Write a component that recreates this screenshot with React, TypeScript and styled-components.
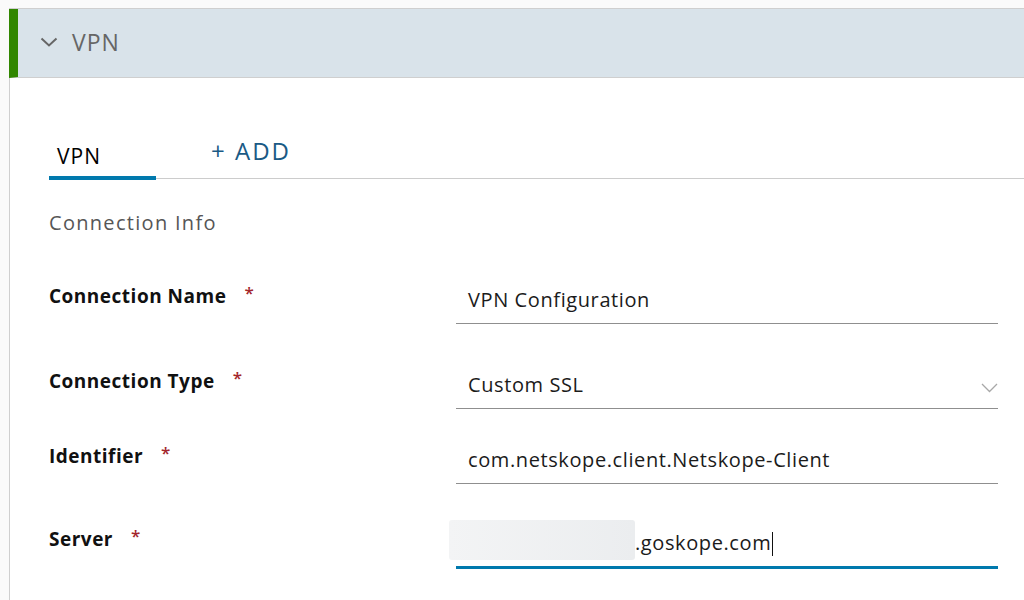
import React from "react";
import styled, { createGlobalStyle } from "styled-components";

const GlobalStyle = createGlobalStyle`
    html, body {
        margin: 0;
        padding: 0;
        background: #fafafa;
        font-family: "Open Sans", "Noto Sans", sans-serif;
    }
`;

const Page = styled.div`
    height: 600px;
    padding: 8px 0 0 9px;
    box-sizing: border-box;
    overflow: hidden;
`;

const Panel = styled.section`
    height: 100%;
    background: #fff;
    border-left: 1px solid #cfcfcf;
    border-top: 1px solid #cfcfcf;
`;

const PanelHeader = styled.div`
    height: 65px;
    display: flex;
    align-items: center;
    gap: 14px;
    padding: 0 0 3px 22px;
    background: #d9e3ea;
    border-left: 9px solid #318700;
    border-bottom: 1px solid #cfcfcf;
    margin-left: -1px;
    color: #666;
    font-size: 23px;
    letter-spacing: 1px;
`;

const PanelBody = styled.div`
    padding: 0 25px 0 39px;
`;

const TabBar = styled.div`
    display: flex;
    align-items: flex-end;
    height: 52px;
    margin-top: 48px;
    margin-right: -25px;
    border-bottom: 1px solid #cccccc;
`;

const Tab = styled.button<{ $active?: boolean }>`
    font-family: inherit;
    background: none;
    border: none;
    border-bottom: 4px solid ${(p) => (p.$active ? "#0079ad" : "transparent")};
    margin-bottom: -2px;
    padding: 0 8px 6px;
    min-width: 107px;
    text-align: left;
    font-size: 21px;
    letter-spacing: 1px;
    color: #000;
    cursor: pointer;
`;

const AddTab = styled.button`
    font-family: inherit;
    background: none;
    border: none;
    align-self: flex-start;
    margin-left: 55px;
    padding: 8px 0 0;
    font-size: 24px;
    letter-spacing: 2px;
    color: #1a5a85;
    cursor: pointer;
`;

const SectionTitle = styled.h3`
    margin: 30px 0 0;
    font-size: 20px;
    font-weight: 400;
    letter-spacing: 1.3px;
    color: #565656;
    line-height: 28px;
`;

const Row = styled.div<{ $top: number }>`
    display: grid;
    grid-template-columns: 407px 542px;
    align-items: start;
    margin-top: ${(p) => p.$top}px;
`;

const Label = styled.label`
    display: flex;
    gap: 18px;
    font-size: 19px;
    font-weight: 700;
    letter-spacing: 0.5px;
    line-height: 26px;
    color: #111;
`;

const Required = styled.span`
    color: #a3262c;
    font-size: 17px;
    font-weight: 600;
    line-height: 20px;
`;

const Field = styled.div<{ $focused?: boolean }>`
    position: relative;
    height: 36px;
    display: flex;
    align-items: flex-start;
    padding: 4px 0 0 12px;
    border-bottom: ${(p) => (p.$focused ? "3px solid #0079ad" : "1px solid #8f8f8f")};
    font-size: 20px;
    letter-spacing: 0.6px;
    line-height: 26px;
    color: #1b1b1b;
`;

const Caret = styled.svg`
    position: absolute;
    right: 0;
    top: 15px;
`;

const Masked = styled.span`
    display: inline-block;
    width: 186px;
    height: 40px;
    margin: -10px 0 0 -19px;
    border-radius: 3px;
    background: linear-gradient(90deg, #f3f4f5 0%, #ebedef 100%);
`;

const Cursor = styled.span`
    display: inline-block;
    width: 1px;
    height: 24px;
    margin: 2px 0 0 1px;
    background: #111;
`;

const Chevron = () => (
    <svg width="18" height="10" viewBox="0 0 18 10">
        <polyline points="1.5,1.5 9,8.5 16.5,1.5" fill="none" stroke="#666" strokeWidth="2" />
    </svg>
);

const fields = [
    { label: "Connection Name", value: "VPN Configuration", top: 46 },
    { label: "Connection Type", value: "Custom SSL", top: 44, select: true },
    { label: "Identifier", value: "com.netskope.client.Netskope-Client", top: 34 },
];

const App: React.FC = () => {
    return (
        <>
            <GlobalStyle />
            <Page>
                <Panel>
                    <PanelHeader>
                        <Chevron />
                        <span>VPN</span>
                    </PanelHeader>
                    <PanelBody>
                        <TabBar>
                            <Tab $active>VPN</Tab>
                            <AddTab>+ ADD</AddTab>
                        </TabBar>
                        <SectionTitle>Connection Info</SectionTitle>
                        {fields.map((f) => (
                            <Row key={f.label} $top={f.top}>
                                <Label>
                                    {f.label}
                                    <Required>*</Required>
                                </Label>
                                <Field>
                                    {f.value}
                                    {f.select && (
                                        <Caret width="17" height="10" viewBox="0 0 17 10">
                                            <polyline
                                                points="1,1 8.5,8.5 16,1"
                                                fill="none"
                                                stroke="#a8a8a8"
                                                strokeWidth="1.3"
                                            />
                                        </Caret>
                                    )}
                                </Field>
                            </Row>
                        ))}
                        <Row $top={42}>
                            <Label>
                                Server
                                <Required>*</Required>
                            </Label>
                            <Field $focused>
                                <Masked />
                                .goskope.com
                                <Cursor />
                            </Field>
                        </Row>
                    </PanelBody>
                </Panel>
            </Page>
        </>
    );
};

export default App;
